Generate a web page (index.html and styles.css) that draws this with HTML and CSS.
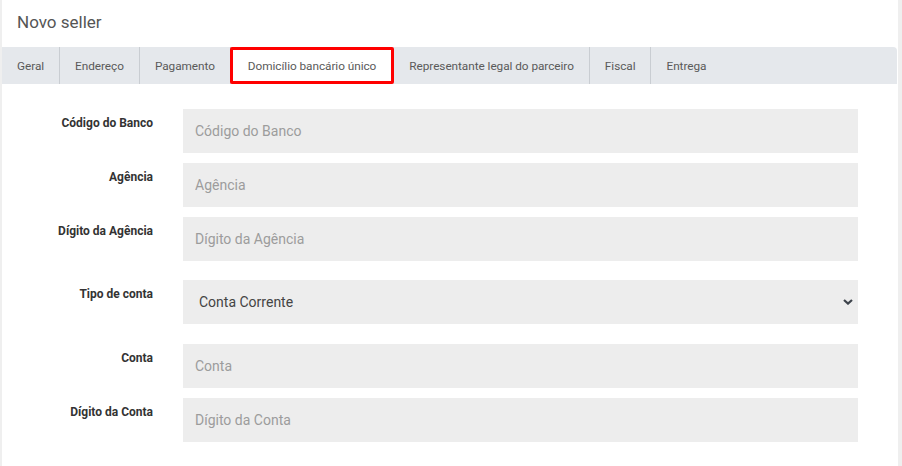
FILE: index.html
```html
<!DOCTYPE html>
<html lang="pt-BR">
<head>
    <meta charset="UTF-8">
    <meta name="viewport" content="width=device-width, initial-scale=1.0">
    <title>Novo seller</title>
    <link rel="stylesheet" href="styles.css">
</head>
<body>
    <div class="pagina">
        <h1 class="titulo">Novo seller</h1>

        <ul class="abas">
            <li class="aba">Geral</li>
            <li class="aba">Endereço</li>
            <li class="aba">Pagamento</li>
            <li class="aba ativa">Domicílio bancário único</li>
            <li class="aba">Representante legal do parceiro</li>
            <li class="aba">Fiscal</li>
            <li class="aba ultima">Entrega</li>
        </ul>

        <form class="formulario">
            <div class="linha">
                <label class="rotulo">Código do Banco</label>
                <input class="campo" type="text" placeholder="Código do Banco">
            </div>
            <div class="linha">
                <label class="rotulo">Agência</label>
                <input class="campo" type="text" placeholder="Agência">
            </div>
            <div class="linha">
                <label class="rotulo">Dígito da Agência</label>
                <input class="campo" type="text" placeholder="Dígito da Agência">
            </div>
            <div class="linha linha-select">
                <label class="rotulo">Tipo de conta</label>
                <div class="select-box">
                    <select class="campo select">
                        <option>Conta Corrente</option>
                        <option>Conta Poupança</option>
                    </select>
                    <!-- seta do select -->
                    <svg class="seta" width="10" height="6" viewBox="0 0 10 6">
                        <path d="M1 1 L5 4.6 L9 1" fill="none" stroke="#3d434b" stroke-width="2.2"/>
                    </svg>
                </div>
            </div>
            <div class="linha">
                <label class="rotulo">Conta</label>
                <input class="campo" type="text" placeholder="Conta">
            </div>
            <div class="linha">
                <label class="rotulo">Dígito da Conta</label>
                <input class="campo" type="text" placeholder="Dígito da Conta">
            </div>
        </form>
    </div>
</body>
</html>
```

FILE: styles.css
```css
html, body {
    height: 100%;
}
body {
    margin: 0;
    background-color: #efefef;
    font-family: Roboto, "Liberation Sans", sans-serif;
    color: #333;
}
.pagina {
    margin: 0 4px 0 2px;
    min-height: 100%;
    background-color: #fff;
}
.titulo {
    margin: 0;
    padding: 11px 15px 0 15px;
    height: 36px;
    font-size: 17px;
    font-weight: 400;
    line-height: 22px;
    color: #555;
}
.abas {
    display: flex;
    margin: 0 1px 0 0;
    padding: 0;
    list-style: none;
    height: 37px;
    background-color: #e5e8ec;
    border-radius: 0 4px 0 0;
}
.aba {
    display: flex;
    align-items: center;
    padding: 0 15px;
    font-size: 11.8px;
    letter-spacing: -0.05px;
    color: #5a5a5a;
    border-right: 1px solid #c9cdd2;
}
.aba.ultima {
    border-right: none;
}
.aba.ativa {
    padding: 0 15px 0 15px;
    margin-left: -1px;
    background-color: #fff;
    border: 3px solid #f00;
    border-radius: 2px;
}
.formulario {
    padding: 25px 40px 0 0;
}
.linha {
    display: flex;
    margin-bottom: 10px;
}
.linha-select {
    margin: 19px 0 20px 0;
}
.rotulo {
    width: 151px;
    margin-right: 30px;
    padding-top: 6px;
    text-align: right;
    font-size: 12px;
    font-weight: 700;
    line-height: 17px;
    color: #333;
}
.campo {
    box-sizing: border-box;
    width: 675px;
    height: 44px;
    padding: 0 12px;
    border: none;
    border-radius: 0;
    background-color: #ededed;
    font-family: Roboto, "Liberation Sans", sans-serif;
    font-size: 14px;
    color: #444;
    outline: none;
}
.campo::placeholder {
    color: #9c9c9c;
}
.select-box {
    position: relative;
}
.select {
    appearance: none;
    -webkit-appearance: none;
    padding-left: 16px;
}
.seta {
    position: absolute;
    right: 5px;
    top: 19px;
}
```
